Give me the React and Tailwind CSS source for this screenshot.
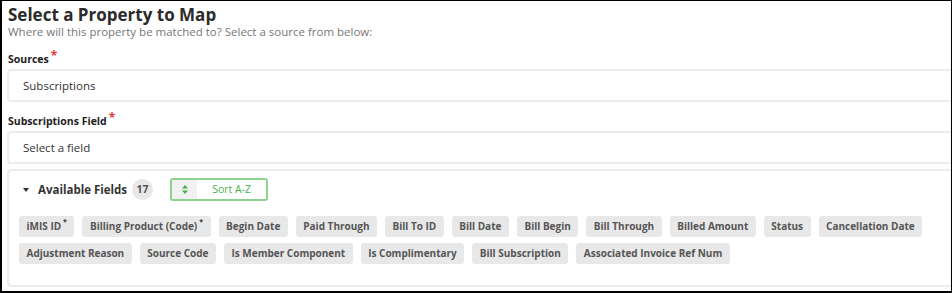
const fields = [
  { name: 'iMIS ID', required: true },
  { name: 'Billing Product (Code)', required: true },
  { name: 'Begin Date' },
  { name: 'Paid Through' },
  { name: 'Bill To ID' },
  { name: 'Bill Date' },
  { name: 'Bill Begin' },
  { name: 'Bill Through' },
  { name: 'Billed Amount' },
  { name: 'Status' },
  { name: 'Cancellation Date' },
  { name: 'Adjustment Reason' },
  { name: 'Source Code' },
  { name: 'Is Member Component' },
  { name: 'Is Complimentary' },
  { name: 'Bill Subscription' },
  { name: 'Associated Invoice Ref Num' },
]

function Label({ children }) {
  return (
    <div className="text-[10.5px] font-bold leading-[14px] text-[#222] pl-[1px]">
      {children}
      <span className="text-[#e53935] text-[12px] relative -top-[3px] ml-[2px]">*</span>
    </div>
  )
}

function Select({ value }) {
  return (
    <div className="w-[960px] h-[33px] border-2 border-[#ececec] rounded-[4px] flex items-center pl-[14px] text-[11.5px] text-[#333]">
      {value}
    </div>
  )
}

export default function App() {
  return (
    <div
      className="w-[952px] h-[293px] overflow-hidden bg-white border-l-2 border-t border-r border-b-2 border-black pl-[5px] pt-[4px]"
      style={{ fontFamily: '"Open Sans", sans-serif' }}
    >
      {/* Heading */}
      <div className="pl-[1px]">
        <h1 className="text-[17px] font-bold leading-[20px] text-[#2b2b2b]">Select a Property to Map</h1>
        <p className="text-[11.5px] leading-[14px] text-[#777]">
          Where will this property be matched to? Select a source from below:
        </p>
      </div>

      <div className="mt-[13px]">
        <Label>Sources</Label>
        <div className="mt-[3px]">
          <Select value="Subscriptions" />
        </div>
      </div>

      <div className="mt-[12px]">
        <Label>Subscriptions Field</Label>
        <div className="mt-[3px]">
          <Select value="Select a field" />
        </div>
      </div>

      {/* Available fields panel */}
      <div className="mt-[5px] w-[960px] h-[118px] border-2 border-[#ececec] rounded-[4px] pl-[10px] pt-[7px]">
        <div className="flex items-center h-[23px]">
          <span className="ml-[4px] w-0 h-0 border-l-[3.5px] border-r-[3.5px] border-t-[4px] border-l-transparent border-r-transparent border-t-[#333]" />
          <span className="ml-[9px] text-[11.5px] font-bold text-[#333]">Available Fields</span>
          <span className="ml-[5px] w-[21px] h-[21px] rounded-full bg-[#e8e8e8] flex items-center justify-center text-[10.5px] font-bold text-[#555]">
            17
          </span>
          <button className="ml-[17px] w-[98px] h-[23px] border-2 border-[#8fd18f] rounded-[3px] flex items-stretch overflow-hidden">
            <span className="w-[25px] bg-[#f1f1f1] flex items-center justify-center">
              <svg width="6" height="9" viewBox="0 0 6 9">
                <path d="M3 0 L6 3.5 H0 Z" fill="#3fae49" />
                <path d="M3 9 L6 5.5 H0 Z" fill="#3fae49" />
              </svg>
            </span>
            <span className="flex-1 flex items-center justify-center text-[10.5px] text-[#4cb050]">Sort A-Z</span>
          </button>
        </div>

        <div className="mt-[15px] flex flex-wrap gap-x-[8px] gap-y-[6px] w-[920px]">
          {fields.map(f => (
            <span
              key={f.name}
              className="h-[21px] px-[7.5px] rounded-[3px] bg-[#e8e8e8] flex items-center text-[10px] font-bold text-[#555]"
            >
              {f.name}
              {f.required && <span className="relative -top-[4px] ml-[2px] text-[7px] text-[#333]">*</span>}
            </span>
          ))}
        </div>
      </div>
    </div>
  )
}
